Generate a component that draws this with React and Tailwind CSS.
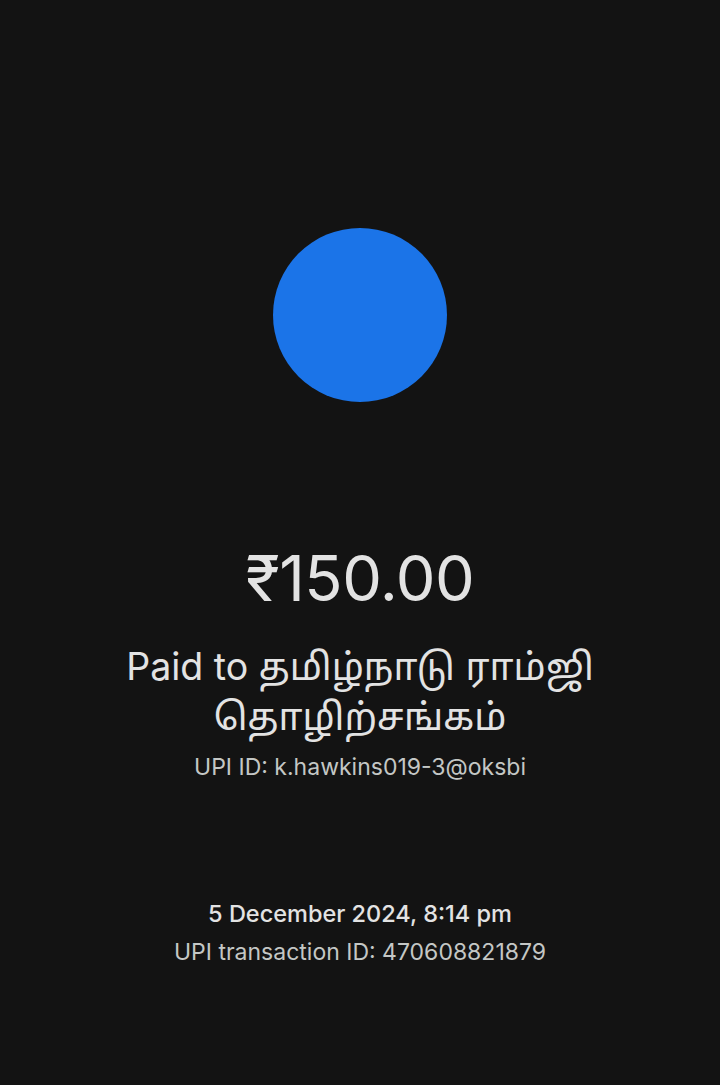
export default function App() {
  return (
    <div
      className="w-[720px] h-[1085px] bg-[#131313] flex flex-col items-center text-center"
      style={{ fontFamily: 'Inter, "Noto Sans", "Noto Sans Tamil", sans-serif' }}
    >
      <div className="mt-[228px] w-[174px] h-[174px] rounded-full bg-[#1b74e8]" />
      <div className="mt-[140px] text-[63px] leading-[72px] text-[#e3e3e3] tracking-[-0.5px]">₹150.00</div>
      <div className="mt-[28px] w-[540px] text-[37.5px] leading-[50px] text-[#e3e3e3]">
        Paid to தமிழ்நாடு ராம்ஜி தொழிற்சங்கம்
      </div>
      <div className="mt-[10px] text-[23px] leading-[30px] text-[#c4c7c5]">UPI ID: k.hawkins019-3@oksbi</div>
      <div className="mt-[117px] text-[23.5px] leading-[30px] font-medium text-[#e3e3e3]">5 December 2024, 8:14 pm</div>
      <div className="mt-[8px] text-[23px] leading-[30px] text-[#c4c7c5]">UPI transaction ID: 470608821879</div>
    </div>
  );
}
